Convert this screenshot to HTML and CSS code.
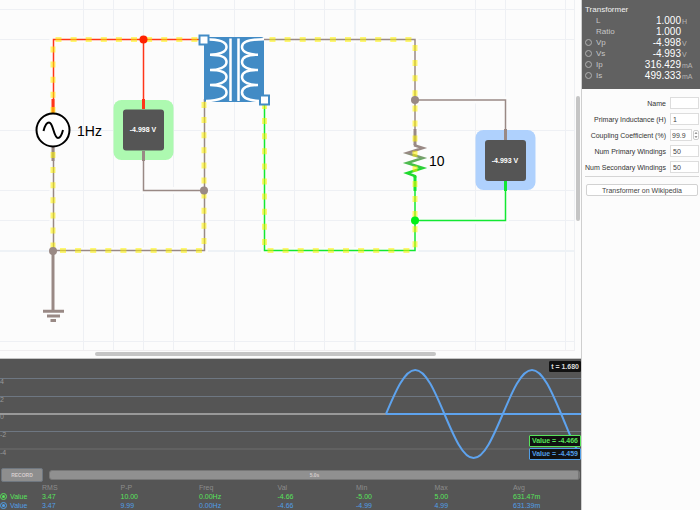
FILE: index.html
```html
<!DOCTYPE html>
<html lang="en">
<head>
  <meta charset="UTF-8">
  <meta name="viewport" content="width=device-width, initial-scale=1">
  <title>Transformer circuit</title>
  <link rel="stylesheet" href="styles.css">
</head>
<body>
  <div class="app">
    <main class="workspace">
      <section class="schematic">
        <svg class="canvas" role="img" aria-label="Circuit schematic">
          <defs>
            <linearGradient id="drop" x1="0" y1="0" x2="0" y2="1">
              <stop offset="0.25" stop-color="#998985"/>
              <stop offset="0.75" stop-color="#1fd92e"/>
            </linearGradient>
          </defs>

          <!-- grid -->
          <path class="grid" d="M83.500 0V351M113.500 0V351M143.500 0V351M173.500 0V351M234.500 0V351M294.500 0V351M324.500 0V351M475.500 0V351M505.500 0V351M565.500 0V351M0 9.500H574M0 39.500H574M0 130.500H574M0 190.500H574M0 220.500H574M0 341.500H574"/>
          <path class="grid major" d="M355 0V351M0 251H574"/>
          <path class="halo" d="M53 120V39.500H200M53 150V251H204.500V101M143.500 40V190.500H204M265 39.500H415V250.500H264.500V100M415 100H505.500V220.500H415M53 251V320"/>

          <!-- probes -->
          <rect class="probe-green" x="113.500" y="100" width="60" height="60" rx="8"/>
          <rect class="probe-blue" x="475.500" y="130" width="60" height="60" rx="8"/>

          <!-- wires -->
          <path class="wire red" d="M53.500 112V39.500H200M143.500 39.500V109"/>
          <path class="wire gray" d="M53.500 147V250.500H204.500V99M143.500 151V190.500H204M264 39.500H415V145M415 100H505.500V139"/>
          <path class="wire green" d="M264.500 100V250.500H415V176M415 220.500H505.500V181"/>
          <path class="lead red" d="M53 99V113M143.500 99V109"/>
          <path class="lead gray" d="M53 147V161M143.500 151V161M415 129V145M505.500 129V140"/>
          <path class="lead green" d="M415 176V191M505.500 181V191"/>
          <path class="resistor" d="M415 144V145.500L423 148L407 153L423 158L407 163L423 168L407 173L415 176V178"/>

          <!-- ground -->
          <path class="ground" d="M53 251V311M43 311.300H64M47 316H60M50.500 320.500H56"/>

          <!-- current flow -->
          <path class="flow" d="M55.500 39.500H198"/>
          <path class="flow" d="M53 46.500V113"/>
          <path class="flow" d="M53 152V248"/>
          <path class="flow" d="M60 250.500H203"/>
          <path class="flow" d="M204 102V246"/>
          <path class="flow" d="M269.500 39.500H412"/>
          <path class="flow" d="M415 45V249"/>
          <path class="flow" d="M267.500 250.500H412"/>
          <path class="flow" d="M264.500 103V247"/>

          <circle class="dot-red" cx="143.500" cy="39.500" r="4"/>
          <circle class="dot-gray" cx="53" cy="251" r="4"/>
          <circle class="dot-gray" cx="204" cy="190.500" r="4"/>
          <circle class="dot-gray" cx="415" cy="100" r="4"/>
          <circle class="dot-green" cx="415" cy="220.500" r="4"/>

          <!-- AC source -->
          <circle class="source" cx="53" cy="130" r="16.500"/>
          <path class="source" d="M43.500 131C45 125 47 122.500 49 122.500C53.500 122.500 53.500 138 58 138C60.500 138 62 134 63 130"/>
          <text class="part-label" x="77" y="136">1Hz</text>
          <text class="part-label" x="429" y="166">10</text>

          <rect class="meter" x="123" y="109.500" width="41" height="41" rx="3"/>
          <text class="meter-text" x="143" y="132">-4.998 V</text>
          <rect class="meter" x="485" y="140" width="41" height="41" rx="3"/>
          <text class="meter-text" x="505" y="163">-4.993 V</text>

          <!-- transformer -->
          <rect class="transformer" x="204" y="37" width="60" height="65" rx="3"/>
          <path class="coil" d="M205 39.300C218 39.300 226.500 41.500 226.500 47S218 54.700 210 54.700C218 54.700 226.500 56.500 226.500 62S218 70 210 70C218 70 226.500 71.500 226.500 77S218 85 210 85C218 85 226.500 86.500 226.500 92.500C226.500 98 218 100.500 206 101"/>
          <path class="coil" d="M264 39.300C251 39.300 242 41.500 242 47S250 54.700 258 54.700C250 54.700 242 56.500 242 62S250 70 258 70C250 70 242 71.500 242 77S250 85 258 85C250 85 242 86.500 242 92.500C242 98 250 100.500 259 101"/>
          <path class="coil" d="M230.500 38.500V101M238.500 38.500V101"/>
          <rect class="terminal" x="199.500" y="35.500" width="9" height="9"/>
          <rect class="terminal" x="260" y="95.500" width="9" height="9"/>
        </svg>
        <div class="scroll-y"><span class="thumb"></span></div>
        <div class="scroll-x"><span class="thumb"></span></div>
      </section>

      <section class="scope">
        <div class="plot">
          <svg class="trace" role="img" aria-label="Voltage over time">
            <path class="rule" d="M0 19.500H2000M0 37.500H2000M0 72.500H2000"/>
            <path class="rule dim" d="M0 90H2000"/>
            <path class="rule zero" d="M0 55H386"/>
            <path class="rule wave" d="M386 55H2000"/>
            <path class="wave" d="M386 55c9.500 -22.500 18.600 -44 29.200 -44s19.700 21.500 29.200 44s18.600 44 29.200 44s19.700 -21.500 29.200 -44s18.600 -44 29.200 -44s19.700 21.500 29.200 44s14 37 20 38"/>
            <g class="axis">
              <text x="0" y="25">4</text>
              <text x="0" y="43">2</text>
              <text x="0" y="60">0</text>
              <text x="0" y="78">-2</text>
              <text x="0" y="96">-4</text>
            </g>
          </svg>
          <div class="tag time">t = 1.680</div>
          <div class="tags">
            <div class="tag first">Value = -4.466</div>
            <div class="tag second">Value = -4.459</div>
          </div>
        </div>
        <div class="controls">
          <button class="record" type="button">RECORD</button>
          <label class="span">
            <input class="span-range" type="range" min="0" max="5" value="5">
            <span class="span-text">5.0s</span>
          </label>
        </div>
        <table class="stats">
          <thead>
            <tr><th></th><th>RMS</th><th>P-P</th><th>Freq</th><th>Val</th><th>Min</th><th>Max</th><th>Avg</th></tr>
          </thead>
          <tbody>
            <tr class="first">
              <td><label class="series"><input type="checkbox" checked>Value</label></td>
              <td>3.47</td><td>10.00</td><td>0.00Hz</td><td>-4.66</td><td>-5.00</td><td>5.00</td><td>631.47m</td>
            </tr>
            <tr class="second">
              <td><label class="series"><input type="checkbox" checked>Value</label></td>
              <td>3.47</td><td>9.99</td><td>0.00Hz</td><td>-4.66</td><td>-4.99</td><td>4.99</td><td>631.39m</td>
            </tr>
          </tbody>
        </table>
      </section>
    </main>

    <aside class="inspector">
      <section class="readout">
        <h2>Transformer</h2>
        <div class="row"><span class="name">L</span><span class="value">1.000</span><span class="unit">H</span></div>
        <div class="row"><span class="name">Ratio</span><span class="value">1.000</span><span class="unit"></span></div>
        <div class="row"><input type="radio" name="plot" id="vp"><label class="name" for="vp">Vp</label><span class="value">-4.998</span><span class="unit">V</span></div>
        <div class="row"><input type="radio" name="plot" id="vs"><label class="name" for="vs">Vs</label><span class="value">-4.993</span><span class="unit">V</span></div>
        <div class="row"><input type="radio" name="plot" id="ip"><label class="name" for="ip">Ip</label><span class="value">316.429</span><span class="unit">mA</span></div>
        <div class="row"><input type="radio" name="plot" id="is"><label class="name" for="is">Is</label><span class="value">499.333</span><span class="unit">mA</span></div>
      </section>

      <form class="properties">
        <label for="name">Name</label>
        <input id="name" type="text">
        <label for="inductance">Primary Inductance (H)</label>
        <input id="inductance" type="text" value="1">
        <label for="coupling">Coupling Coefficient (%)</label>
        <div class="stepped">
          <input id="coupling" type="text" value="99.9">
          <div class="stepper">
            <button type="button" aria-label="Increase"><svg viewBox="0 0 4 4"><path d="M1 3L2 1.500L3 3"/></svg></button>
            <button type="button" aria-label="Decrease"><svg viewBox="0 0 4 4"><path d="M1 1L2 2.500L3 1"/></svg></button>
          </div>
        </div>
        <label for="primary">Num Primary Windings</label>
        <input id="primary" type="text" value="50">
        <label for="secondary">Num Secondary Windings</label>
        <input id="secondary" type="text" value="50">
      </form>
      <div class="more">
        <button class="wiki" type="button">Transformer on Wikipedia</button>
      </div>
    </aside>
  </div>
</body>
</html>
```

FILE: styles.css
```css
* {
  box-sizing: border-box;
}
body {
  margin: 0;
  font-family: "Liberation Sans", Arial, sans-serif;
  font-size: 8px;
  background: #fcfcfc;
}
button, input {
  font: inherit;
  color: inherit;
  margin: 0;
  padding: 0;
}
.app {
  display: grid;
  grid-template-columns: minmax(0, 1fr) 119px;
  min-height: 100vh;
}
.workspace {
  display: flex;
  flex-direction: column;
  min-width: 0;
}

/* schematic */
.schematic {
  flex: 1;
  display: grid;
  grid-template-columns: minmax(0, 1fr) 6px;
  grid-template-rows: minmax(351px, 1fr) 7px;
  border-bottom: 1px solid #c4c4c4;
}
.canvas {
  display: block;
  width: 100%;
  height: 100%;
  border-right: 1px solid #eef0f3;
  border-bottom: 1px solid #f0eef0;
}
.scroll-y {
  padding: 96px 1px 0 1px;
}
.scroll-x {
  padding: 1px 0 0 95px;
}
.thumb {
  display: block;
  background: #c5c5c5;
  border-radius: 2px;
}
.scroll-y .thumb {
  width: 4px;
  height: 125px;
}
.scroll-x .thumb {
  width: 71%;
  height: 4px;
}
.canvas path {
  fill: none;
}
.canvas .grid {
  stroke: #eef0f4;
  stroke-width: 1;
}
.canvas .major {
  stroke: #eef2f6;
  stroke-width: 2;
}
.halo {
  stroke: #fcfcfc;
  stroke-width: 7;
}
.wire {
  stroke-width: 1.5;
}
.lead {
  stroke-width: 3;
}
.red {
  stroke: #ff3519;
}
.gray {
  stroke: #998985;
}
.green {
  stroke: #12e832;
}
.resistor {
  stroke: url(#drop);
  stroke-width: 2.5;
}
.ground {
  stroke: #998985;
  stroke-width: 3;
}
.flow {
  stroke: #fff200;
  stroke-opacity: 0.55;
  stroke-width: 5;
  stroke-dasharray: 6 9.1;
}
.dot-red {
  fill: #ff2200;
}
.dot-gray {
  fill: #998985;
}
.dot-green {
  fill: #00f018;
}
.source {
  fill: none;
  stroke: #000;
  stroke-width: 2;
}
circle.source {
  fill: #fff;
}
.part-label {
  font-size: 14px;
}
.probe-green {
  fill: #adf9b0;
}
.probe-blue {
  fill: #afd1fd;
}
.meter {
  fill: #555;
}
.meter-text {
  font-size: 7px;
  font-weight: bold;
  text-anchor: middle;
  fill: #fff;
}
.transformer {
  fill: #428bc5;
}
.coil {
  stroke: #fff;
  stroke-width: 2.5;
}
.terminal {
  fill: #fff;
  stroke: #428bc5;
  stroke-width: 2;
}

/* scope */
.scope {
  padding-bottom: 1px;
  background: #555;
  color: #8c8c8c;
}
.plot {
  position: relative;
  height: 107px;
}
.trace {
  display: block;
  width: 100%;
  height: 100%;
}
.rule {
  stroke: #6e7782;
  stroke-width: 1;
}
.dim {
  stroke: #616161;
  stroke-width: 2;
}
.zero {
  stroke: #999;
  stroke-width: 2;
}
.wave {
  fill: none;
  stroke: #5ea3ee;
  stroke-width: 2;
}
.axis {
  font-size: 7px;
  fill: #999;
}
.tag {
  background: #111;
  border: 1px solid #111;
  border-radius: 1px;
  padding: 0 2px;
  font-size: 7px;
  font-weight: bold;
  line-height: 10px;
}
.time {
  position: absolute;
  top: 2px;
  right: 0;
  padding: 0 1px;
  line-height: 9px;
  color: #ddd;
}
.tags {
  position: absolute;
  right: 0;
  bottom: 6px;
  display: grid;
  gap: 1px;
}
.first {
  color: #57e35b;
}
.second {
  color: #519ee6;
}
.tag.first, .tag.second {
  border-color: currentColor;
}
.controls {
  display: flex;
  align-items: center;
  gap: 6px;
  height: 17px;
  padding: 0 1px;
}
.record {
  width: 42px;
  height: 14px;
  border: 1px solid #6f7780;
  border-radius: 2px;
  background: #8e8e8e;
  color: #d4cccc;
  font-size: 5px;
  font-weight: bold;
}
.span {
  flex: 1;
  display: grid;
  align-items: center;
  justify-items: center;
}
.span-range, .span-text {
  grid-area: 1 / 1;
}
.span-range {
  appearance: none;
  width: 100%;
  height: 10px;
  border: 1px solid #777;
  border-radius: 3px;
  background: #909090;
}
.span-range::-webkit-slider-thumb {
  appearance: none;
  width: 3px;
  height: 8px;
  border-right: 1px solid #777;
}
.span-text {
  z-index: 1;
  font-size: 5px;
  font-weight: bold;
  color: #d4cccc;
  pointer-events: none;
}
.stats {
  width: 100%;
  table-layout: fixed;
  border-collapse: collapse;
  line-height: 9px;
  font-size: 7px;
}
.stats th, .stats td {
  padding: 0;
  height: 9px;
  text-align: left;
  font-weight: normal;
}
.stats th:first-child {
  width: 42px;
}
.stats th:last-child {
  width: 68px;
}
.series {
  display: flex;
  align-items: center;
  gap: 3px;
}
.series input {
  appearance: none;
  width: 7px;
  height: 7px;
  border: 1px solid currentColor;
  border-radius: 50%;
  background: currentColor;
  background-clip: content-box;
  padding: 1px;
}

/* inspector */
.inspector {
  border-left: 1px solid #cfcfcf;
}
.readout {
  height: 89px;
  padding: 5px 5px 0 3px;
  background: #616161;
  color: #ddd;
}
.readout h2 {
  margin: 0;
  font-size: 8px;
  font-weight: normal;
  line-height: 10px;
  color: #f2f2f2;
}
.row {
  display: grid;
  grid-template-columns: 7px 18px 1fr 10px;
  column-gap: 4px;
  align-items: center;
  height: 11px;
}
.row .name {
  grid-column: 2;
  color: #c6c6c6;
}
.row input {
  appearance: none;
  width: 7px;
  height: 7px;
  border: 1px solid #b0b0b0;
  border-radius: 50%;
}
.row .value {
  grid-column: 3;
  font-size: 10px;
  line-height: 11px;
  text-align: right;
  color: #fff;
}
.row .unit {
  margin-left: -3px;
  padding-top: 2px;
  font-size: 7px;
  color: #b5b5b5;
}
.properties {
  display: grid;
  grid-template-columns: 1fr 29px;
  gap: 4px;
  align-items: center;
  padding: 8px 1px 3px 3px;
  font-size: 7px;
  color: #333;
}
.properties label {
  text-align: right;
  white-space: nowrap;
}
.properties input {
  width: 100%;
  min-width: 0;
  height: 12px;
  padding: 0 2px;
  border: 1px solid #ddd;
  background: #fff;
  color: #444;
}
.stepped {
  display: grid;
  grid-template-columns: 1fr 6px;
  gap: 1px;
  align-items: center;
}
.properties .stepped input {
  padding: 0 1px;
}
.stepper {
  display: grid;
  border: 1px solid #ccc;
  border-radius: 2px;
  background: #fff;
}
.stepper button {
  height: 4px;
  border: 0;
  background: none;
}
.stepper svg {
  display: block;
  width: 4px;
  height: 4px;
  fill: none;
  stroke: #555;
  stroke-width: 0.7;
}
.more {
  margin: 0 1px 0 3px;
  padding: 7px 1px;
  border-top: 1px solid #d5d5d5;
}
.wiki {
  display: block;
  width: 100%;
  height: 12px;
  border: 1px solid #d2d2d2;
  border-radius: 2px;
  background: #fff;
  color: #444;
  font-size: 7px;
}
```
